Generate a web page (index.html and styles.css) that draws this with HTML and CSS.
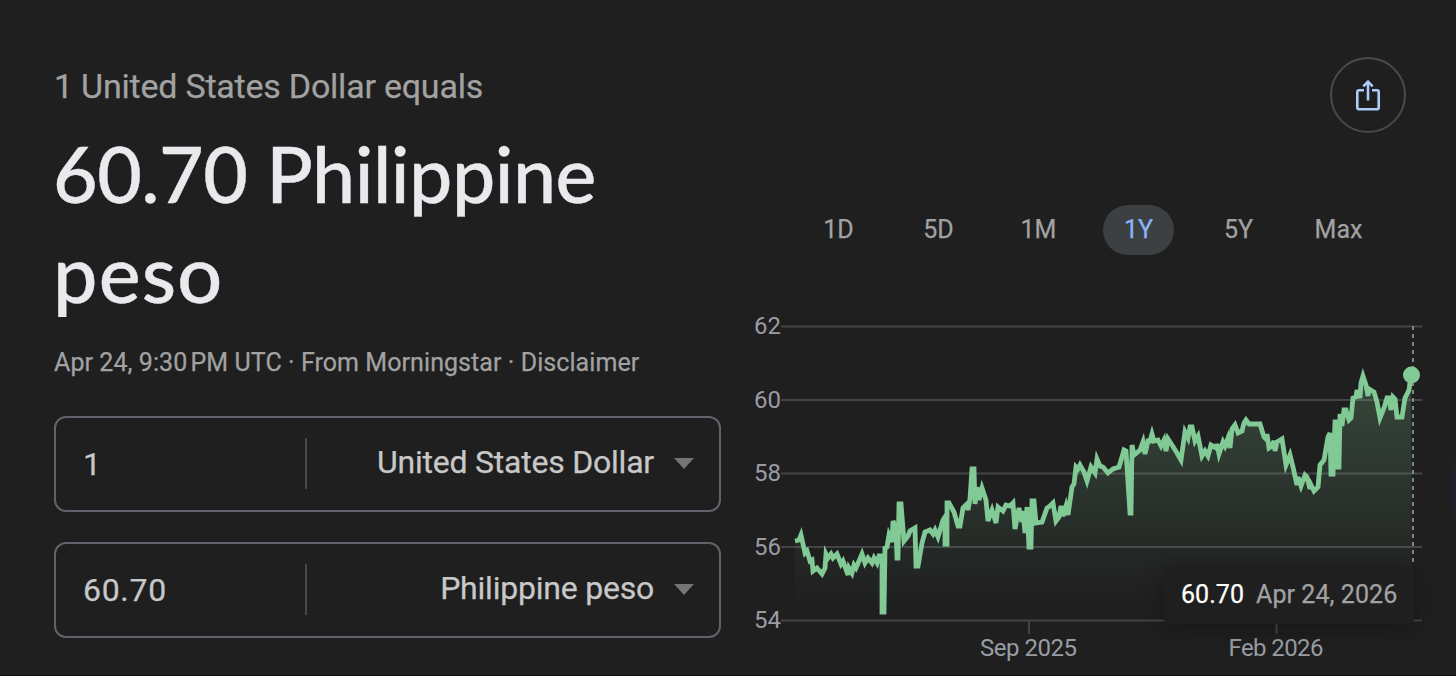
FILE: index.html
```
<!DOCTYPE html>
<html lang="en">
<head>
<meta charset="UTF-8">
<meta name="viewport" content="width=device-width, initial-scale=1.0">
<title>Currency Converter</title>
<link rel="stylesheet" href="styles.css">
</head>
<body>
<div class="converter">
  <div class="left">
    <div class="equals">1 United States Dollar equals</div>
    <h1 class="amount">60.70 Philippine<br><span class="unit">peso</span></h1>
    <div class="source">Apr 24, 9:30&#8239;PM UTC · From Morningstar · <span class="disclaimer">Disclaimer</span></div>

    <div class="field">
      <div class="value">1</div>
      <div class="currency"><span class="usd">United States Dollar</span><span class="arrow"></span></div>
    </div>
    <div class="field">
      <div class="value">60.70</div>
      <div class="currency"><span class="php">Philippine peso</span><span class="arrow"></span></div>
    </div>
  </div>

  <div class="right">
    <button class="share" aria-label="Share">
      <svg width="26" height="34" viewBox="0 0 26 34" fill="none" stroke="#aecbfa" stroke-width="2.6">
        <path d="M9 12.3H4Q2.3 12.3 2.3 14V29.500Q2.300 31.200 4 31.200H22Q23.700 31.200 23.700 29.500V14Q23.700 12.300 22 12.300H17"/>
        <path d="M13 22.500V3.500M8.300 8.300L13 3.600L17.700 8.300"/>
      </svg>
    </button>

    <div class="tabs">
      <div class="tab">1D</div>
      <div class="tab">5D</div>
      <div class="tab">1M</div>
      <div class="tab active">1Y</div>
      <div class="tab">5Y</div>
      <div class="tab">Max</div>
    </div>

    <div class="chart">
      <svg width="680" height="360" viewBox="750 310 680 360">
        <defs>
          <linearGradient id="fade" gradientUnits="userSpaceOnUse" x1="0" y1="372" x2="0" y2="606">
            <stop offset="0" stop-color="#81c995" stop-opacity="0.24"/>
            <stop offset="1" stop-color="#81c995" stop-opacity="0"/>
          </linearGradient>
        </defs>
        <g class="grid">
          <path d="M781 326.500H1422M781 400H1422M781 473.500H1422M781 547H1422M781 620.500H1422"/>
          <path d="M1029 621V634M1276.500 621V634"/>
        </g>
        <g class="labels">
          <text x="781" y="334" text-anchor="end">62</text>
          <text x="781" y="407.500" text-anchor="end">60</text>
          <text x="781" y="481" text-anchor="end">58</text>
          <text x="781" y="554.500" text-anchor="end">56</text>
          <text x="781" y="628" text-anchor="end">54</text>
          <text x="980" y="656" textLength="97">Sep 2025</text>
          <text x="1228.500" y="656" textLength="95">Feb 2026</text>
        </g>
        <path id="area" fill="url(#fade)"/>
        <polyline id="line" class="line"/>
        <path class="marker" d="M1413 326V566"/>
        <circle cx="1411.500" cy="375" r="8.500" fill="#81c995"/>
      </svg>
      <div class="tooltip"><b>60.70</b><span>Apr 24, 2026</span></div>
    </div>
  </div>
</div>

<script src="chart.js"></script>
</body>
</html>
```
FILE: styles.css
```
* {
  box-sizing: border-box;
}

body {
  margin: 0;
  height: 676px;
  overflow: hidden;
  background: radial-gradient(ellipse 12px 45px at 1460px 490px, #1d2634, transparent) #1f1f1f;
  border-bottom: 1px solid #160d13;
  font-family: Roboto, sans-serif;
  color: #a2a2a2;
  -webkit-text-stroke: 0.25px currentColor;
}

.converter {
  display: flex;
  padding-left: 54px;
}

.left {
  width: 667px;
  padding-top: 65px;
}

.equals {
  font-size: 34px;
  line-height: 43px;
  letter-spacing: -0.22px;
  white-space: nowrap;
}

.amount {
  margin: 16px 0 0 -1px;
  font-family: Lato, sans-serif;
  font-size: 77px;
  font-weight: 500;
  line-height: 99px;
  letter-spacing: -0.5px;
  color: #e8eaed;
  -webkit-text-stroke: 0.4px #e8eaed;
  white-space: nowrap;
}

.unit {
  font-size: 79px;
  letter-spacing: 1.2px;
}

.source {
  margin-top: 24px;
  font-size: 25px;
  line-height: 32px;
  letter-spacing: 0.07px;
  white-space: nowrap;
}

.field {
  display: flex;
  align-items: center;
  height: 96px;
  margin-top: 37px;
  padding: 0 25px 2px 27px;
  border: 2px solid #63626b;
  border-radius: 12px;
  font-size: 32px;
  color: #c8c8c8;
}

.field + .field {
  margin-top: 30px;
}

.value {
  width: 224px;
  height: 51px;
  line-height: 52px;
  letter-spacing: 0.7px;
  border-right: 2px solid #48484b;
}

.currency {
  flex: 1;
  display: flex;
  align-items: center;
  justify-content: flex-end;
  line-height: 40px;
  letter-spacing: -0.22px;
  padding-bottom: 3px;
}

.arrow {
  margin: 4px 0 0 20px;
  border: 10.5px solid transparent;
  border-top: 11px solid #757575;
  border-bottom: 0;
}

.right {
  display: flex;
  flex-direction: column;
  width: 735px;
  padding: 57px 0 0 29px;
}

.share {
  align-self: flex-end;
  display: flex;
  align-items: center;
  justify-content: center;
  width: 76px;
  height: 76px;
  margin-right: 50px;
  padding: 0;
  background: none;
  border: 2px solid #4a4a4a;
  border-radius: 50%;
}

.tabs {
  display: flex;
  gap: 29px;
  margin: 72px 0 0 53px;
}

.tab {
  width: 71px;
  height: 50px;
  border-radius: 25px;
  font-size: 25px;
  line-height: 49px;
  text-align: center;
}

.tab.active {
  background: #3c4043;
  color: #8ab4f8;
}

.chart {
  position: relative;
  width: 680px;
  height: 360px;
  margin-top: 55px;
}

.chart svg {
  display: block;
}

.grid path {
  fill: none;
  stroke: #434449;
  stroke-width: 2;
}

.labels text {
  font-size: 24px;
  fill: #999da3;
  -webkit-text-stroke: 0;
}

.line {
  fill: none;
  stroke: #81c995;
  stroke-width: 4.8;
  stroke-linejoin: miter;
  stroke-miterlimit: 4;
}

.marker {
  stroke: #858585;
  stroke-width: 2;
  stroke-dasharray: 4 4;
}

.tooltip {
  position: absolute;
  left: 414px;
  top: 256px;
  display: flex;
  align-items: center;
  gap: 12px;
  width: 250px;
  height: 58px;
  padding: 0 17px 2px;
  background: #1f1f1f;
  border-radius: 4px;
  box-shadow: 0 4px 24px rgba(0, 0, 0, 0.3);
  font-size: 25px;
  letter-spacing: 0.06px;
  white-space: nowrap;
}

.tooltip b {
  font-weight: 400;
  color: #fff;
}
```
FILE: chart.js
```
const points = `795,541 799,540 801,535 805,553 807,551 810,561 812,560 813,571 817,568
  822,574 825,568 826,554 828,558 831,554 833,558 837,554 841,564 843,561 848,575
  849,568 852,573 854,565 856,568 862,554 865,563 868,558 872,563 874,558 877,563
  879,556 882,556 882,612 884,612 885,548 887,547 889,535 892,542 893,521 896,528
  897,558 898,558 899,504 901,504 904,541 908,536 910,531 915,528 916,566 918,566
  922,543 925,532 930,530 933,534 935,530 938,537 943,520 945,517 945,544 947,544
  947,503 949,503 954,512 958,526 960,526 963,508 967,504 968,510 970,499 972,469
  974,469 975,504 977,487 979,500 982,488 986,500 988,521 992,510 996,523 998,507
  1003,511 1006,505 1010,506 1013,503 1015,529 1019,508 1022,522 1023,511 1025,533
  1027,507 1029,547 1031,547 1032,501 1034,501 1036,523 1042,522 1047,508 1050,506
  1053,503 1056,521 1059,517 1061,506 1063,516 1066,506 1068,515 1072,487 1074,484
  1076,467 1078,469 1080,465 1084,472 1087,481 1091,467 1095,473 1097,459 1100,466
  1103,467 1108,473 1113,469 1119,467 1122,457 1124,450 1126,451 1130,513 1131,513
  1132,445 1134,455 1140,450 1143,442 1145,454 1148,441 1150,441 1152,434 1154,441
  1158,440 1161,446 1164,440 1166,451 1168,439 1172,445 1177,453 1181,460 1185,432
  1188,438 1190,427 1192,427 1195,441 1198,436 1202,456 1205,451 1208,456 1211,445
  1216,448 1217,444 1219,454 1223,442 1225,446 1228,438 1230,448 1232,429 1235,425
  1238,433 1242,431 1244,423 1246,420 1249,424 1260,424 1264,437 1266,439 1267,434
  1269,448 1272,446 1274,441 1275,451 1277,442 1282,439 1286,465 1290,455 1293,467
  1297,485 1298,477 1301,486 1305,475 1307,477 1310,489 1311,485 1314,491 1318,487
  1320,465 1324,460 1328,437 1330,433 1331,474 1333,474 1335,422 1337,422 1338,467
  1339,467 1340,414 1342,426 1344,410 1346,410 1349,420 1351,418 1353,398 1356,397
  1357,390 1360,398 1361,383 1363,376 1366,385 1368,396 1369,389 1374,392 1377,402
  1380,418 1384,408 1387,398 1389,398 1391,410 1393,397 1395,399 1397,417 1402,417
  1405,398 1409,390 1411,375`;

document.getElementById('line').setAttribute('points', points);
document.getElementById('area').setAttribute('d', 'M795,620 L' + points + ' L1412,620 Z');
```
